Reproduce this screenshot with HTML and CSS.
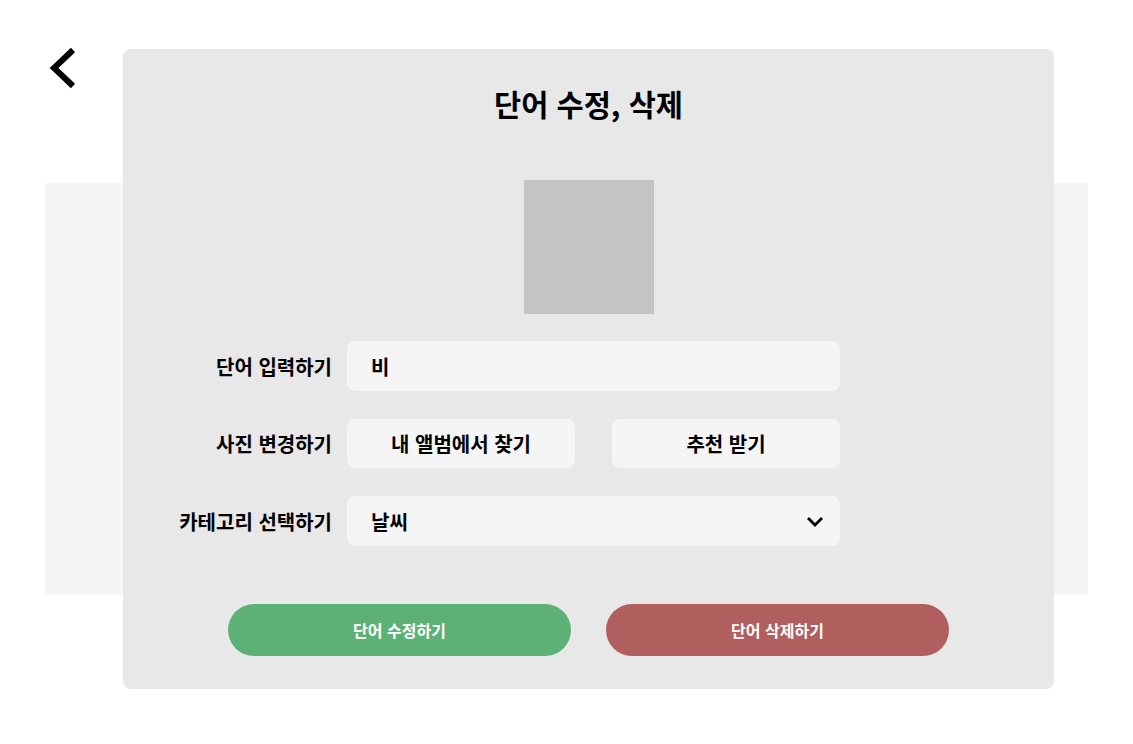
FILE: index.html
```html
<!DOCTYPE html>
<html lang="ko">
<head>
<meta charset="utf-8">
<link rel="stylesheet" href="styles.css">
</head>
<body>
<div class="page">
  <button class="back" aria-label="뒤로">
    <svg width="32" height="46" viewBox="0 0 32 46"><path d="M26 4 L7 22 L26 40" fill="none" stroke="#000" stroke-width="6" stroke-linejoin="miter" stroke-linecap="butt"/></svg>
  </button>
  <div class="strip"></div>
  <div class="modal">
    <h1 class="title">단어 수정, 삭제</h1>
    <div class="photo"></div>
    <div class="form">
      <div class="row">
        <label class="label">단어 입력하기</label>
        <div class="field"><span class="value">비</span></div>
      </div>
      <div class="row short">
        <label class="label">사진 변경하기</label>
        <div class="pair">
          <div class="choice">내 앨범에서 찾기</div>
          <div class="choice">추천 받기</div>
        </div>
      </div>
      <div class="row">
        <label class="label">카테고리 선택하기</label>
        <div class="field select"><span class="value">날씨</span>
          <svg class="chev" width="18" height="11" viewBox="0 0 18 11"><path d="M2 2 L9 9 L16 2" fill="none" stroke="#000" stroke-width="2.8"/></svg>
        </div>
      </div>
    </div>
    <div class="actions">
      <button class="btn edit">단어 수정하기</button>
      <button class="btn del">단어 삭제하기</button>
    </div>
  </div>
</div>
</body>
</html>
```
FILE: styles.css
```css
* { box-sizing: border-box; }
html, body { margin: 0; padding: 0; background: #fff; }
body { font-family: "Noto Sans CJK KR", "Noto Sans", sans-serif; color: #000; }
.page { position: relative; width: 1133px; height: 744px; }
.back {
  position: absolute; left: 47px; top: 46px;
  border: 0; background: none; padding: 0; width: 32px; height: 46px; cursor: pointer;
}
.back svg { display: block; }
.strip {
  position: absolute; left: 45px; top: 183px; width: 1043px; height: 412px;
  background: #f5f5f5;
}
.modal {
  position: absolute; left: 123px; top: 49px; width: 931px; height: 640px;
  background: #e8e8e8; border-radius: 8px;
  display: flex; flex-direction: column; align-items: center;
}
.title {
  margin: 31px 0 0; font-size: 29.5px; font-weight: 700; line-height: 46px;
}
.photo { width: 130px; height: 134px; background: #c4c4c4; margin-top: 54px; }
.form {
  margin-top: 27px; width: 100%; display: flex; flex-direction: column; gap: 28px;
  padding-left: 24px;
}
.row { display: flex; align-items: center; height: 50px; }
.row.short { height: 49px; }
.label {
  width: 185px; text-align: right; font-size: 20px; font-weight: 700; white-space: nowrap;
}
.field {
  margin-left: 15px; width: 493px; height: 50px; background: #f5f5f5; border-radius: 8px;
  display: flex; align-items: center; padding: 0 16px 0 24px;
}
.value { font-size: 20px; font-weight: 700; }
.select { justify-content: space-between; }
.chev { display: block; }
.pair { margin-left: 15px; width: 493px; display: flex; justify-content: space-between; }
.choice {
  width: 228px; height: 49px; background: #f5f5f5; border-radius: 8px;
  display: flex; align-items: center; justify-content: center;
  font-size: 20px; font-weight: 700;
}
.actions { margin-top: 58px; display: flex; gap: 35px; }
.btn {
  width: 343px; height: 52px; border: 0; border-radius: 26px; color: #fff;
  font-family: inherit; font-size: 16px; font-weight: 700; cursor: pointer;
}
.edit { background: #5db176; }
.del { background: #b05e5e; }
```
